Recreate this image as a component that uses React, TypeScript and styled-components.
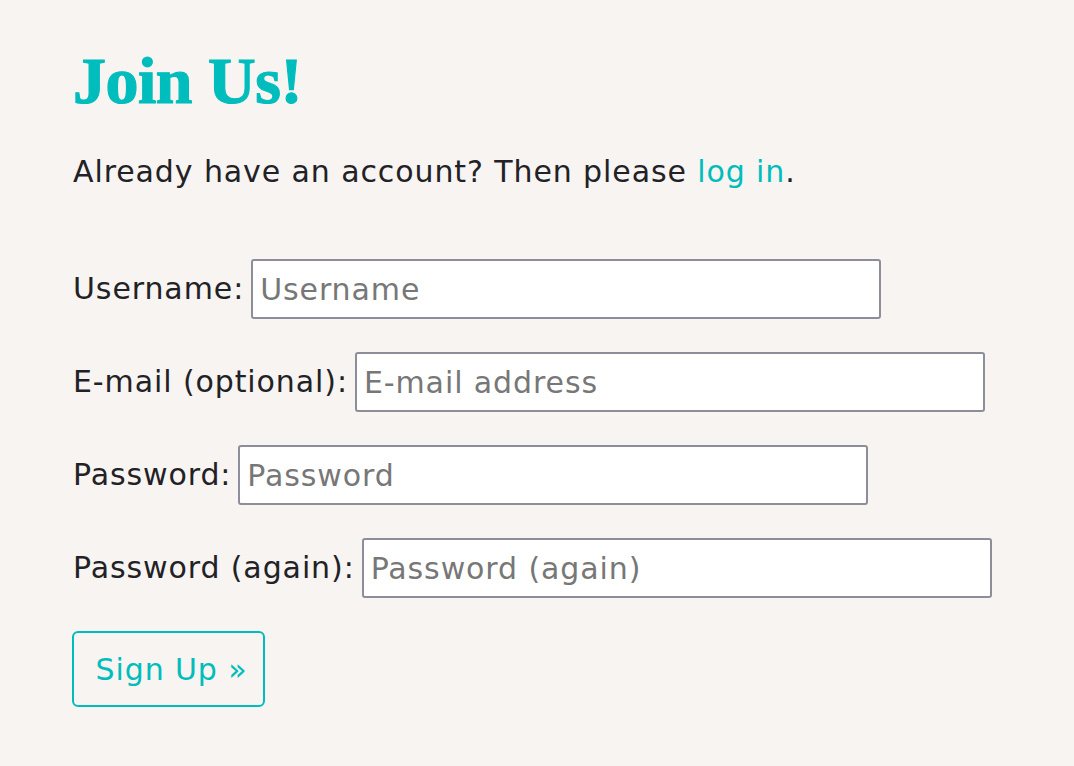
import React from "react";
import styled, { createGlobalStyle } from "styled-components";

const Global = createGlobalStyle`
  html, body { margin: 0; padding: 0; background: #f7f4f1; }
  body { font-family: "DejaVu Sans", "Noto Sans", sans-serif; color: #222226; }
`;

const Page = styled.main`
  padding: 36px 72px 40px 73px;
  display: flex;
  flex-direction: column;
`;

const Title = styled.h1`
  margin: 0;
  font-family: "Liberation Serif", "DejaVu Serif", serif;
  font-weight: 700;
  font-size: 66px;
  line-height: 90px;
  letter-spacing: -0.5px;
  color: #00bdbd;
  -webkit-text-stroke: 1.2px #00bdbd;
`;

const Intro = styled.p`
  margin: 26px 0 67px;
  font-size: 30px;
  line-height: 40px;
  letter-spacing: 0.9px;
`;

const Link = styled.a`
  color: #00bdbd;
  text-decoration: none;
`;

const Form = styled.form`
  display: flex;
  flex-direction: column;
  align-items: flex-start;
  gap: 33px;
`;

const Row = styled.div`
  display: flex;
  align-items: center;
  gap: 7px;
`;

const Label = styled.label`
  font-size: 30px;
  line-height: 40px;
  letter-spacing: 0.9px;
`;

const Input = styled.input`
  box-sizing: border-box;
  width: 630px;
  height: 60px;
  padding: 0 7px;
  border: 2px solid #8e8e9a;
  border-radius: 3px;
  background: #fff;
  font-family: inherit;
  font-size: 30px;
  letter-spacing: 0.9px;
  color: #222;
  &::placeholder { color: #777; }
`;

const Button = styled.button`
  box-sizing: border-box;
  width: 193px;
  height: 76px;
  margin-left: -1px;
  padding: 0 0 0 6px;
  border: 2px solid #00bdbd;
  border-radius: 6px;
  background: transparent;
  color: #00bdbd;
  font-family: inherit;
  font-size: 30px;
  letter-spacing: 0.9px;
`;

export default function App() {
  return (
    <>
      <Global />
      <Page>
        <Title>Join Us!</Title>
        <Intro>
          Already have an account? Then please <Link href="#">log in</Link>.
        </Intro>
        <Form onSubmit={(e) => e.preventDefault()}>
          <Row>
            <Label htmlFor="u">Username:</Label>
            <Input id="u" placeholder="Username" />
          </Row>
          <Row>
            <Label htmlFor="e">E-mail (optional):</Label>
            <Input id="e" placeholder="E-mail address" />
          </Row>
          <Row>
            <Label htmlFor="p1">Password:</Label>
            <Input id="p1" type="password" placeholder="Password" />
          </Row>
          <Row>
            <Label htmlFor="p2">Password (again):</Label>
            <Input id="p2" type="password" placeholder="Password (again)" />
          </Row>
          <Button type="submit">Sign Up »</Button>
        </Form>
      </Page>
    </>
  );
}
